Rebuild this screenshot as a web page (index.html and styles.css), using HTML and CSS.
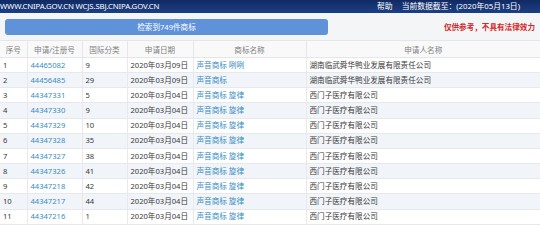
FILE: index.html
```html
<!DOCTYPE html>
<html lang="zh-CN">
<head>
<meta charset="utf-8">
<link rel="stylesheet" href="styles.css">
</head>
<body>
<div class="topbar">
  <span class="site">WWW.CNIPA.GOV.CN WCJS.SBJ.CNIPA.GOV.CN</span>
  <span class="right"><span class="help">帮助</span><span class="date">当前数据截至：(2020年05月13日)</span></span>
</div>
<div class="toolbar">
  <div class="count">检索到749件商标</div>
  <div class="notice">仅供参考，不具有法律效力</div>
</div>
<table class="grid">
  <colgroup>
    <col class="c1"><col class="c2"><col class="c3"><col class="c4"><col class="c5"><col class="c6">
  </colgroup>
  <thead>
    <tr><th>序号</th><th>申请/注册号</th><th>国际分类</th><th>申请日期</th><th>商标名称</th><th>申请人名称</th></tr>
  </thead>
  <tbody>
    <tr><td>1</td><td class="lk">44465082</td><td>9</td><td>2020年03月09日</td><td class="lk">声音商标 咧咧</td><td>湖南临武舜华鸭业发展有限责任公司</td></tr>
    <tr><td>2</td><td class="lk">44456485</td><td>29</td><td>2020年03月09日</td><td class="lk">声音商标</td><td>湖南临武舜华鸭业发展有限责任公司</td></tr>
    <tr><td>3</td><td class="lk">44347331</td><td>5</td><td>2020年03月04日</td><td class="lk">声音商标 旋律</td><td>西门子医疗有限公司</td></tr>
    <tr><td>4</td><td class="lk">44347330</td><td>9</td><td>2020年03月04日</td><td class="lk">声音商标 旋律</td><td>西门子医疗有限公司</td></tr>
    <tr><td>5</td><td class="lk">44347329</td><td>10</td><td>2020年03月04日</td><td class="lk">声音商标 旋律</td><td>西门子医疗有限公司</td></tr>
    <tr><td>6</td><td class="lk">44347328</td><td>35</td><td>2020年03月04日</td><td class="lk">声音商标 旋律</td><td>西门子医疗有限公司</td></tr>
    <tr><td>7</td><td class="lk">44347327</td><td>38</td><td>2020年03月04日</td><td class="lk">声音商标 旋律</td><td>西门子医疗有限公司</td></tr>
    <tr><td>8</td><td class="lk">44347326</td><td>41</td><td>2020年03月04日</td><td class="lk">声音商标 旋律</td><td>西门子医疗有限公司</td></tr>
    <tr><td>9</td><td class="lk">44347218</td><td>42</td><td>2020年03月04日</td><td class="lk">声音商标 旋律</td><td>西门子医疗有限公司</td></tr>
    <tr><td>10</td><td class="lk">44347217</td><td>44</td><td>2020年03月04日</td><td class="lk">声音商标 旋律</td><td>西门子医疗有限公司</td></tr>
    <tr><td>11</td><td class="lk">44347216</td><td>1</td><td>2020年03月04日</td><td class="lk">声音商标 旋律</td><td>西门子医疗有限公司</td></tr>
  </tbody>
</table>
</body>
</html>
```
FILE: styles.css
```css
html, body {
  margin: 0;
  padding: 0;
  background: #ffffff;
  font-family: "Noto Sans", "Noto Sans CJK SC", sans-serif;
  font-size: 7.6px;
  color: #3a3a3a;
  overflow: hidden;
}
.topbar {
  height: 13px;
  background: linear-gradient(#112a63, #1c3f84);
  color: #ffffff;
  display: flex;
  align-items: center;
  justify-content: space-between;
  padding: 0 20px 0 0;
  font-size: 7.8px;
  line-height: 13px;
}
.site {
  letter-spacing: -0.15px;
}
.right {
  display: flex;
  gap: 9px;
}
.toolbar {
  height: 27px;
  background: #f4f5f7;
  display: flex;
  align-items: center;
  padding: 0 5px;
  box-sizing: border-box;
  justify-content: space-between;
}
.count {
  width: 323px;
  height: 16px;
  margin-top: 1px;
  background: #5f92d9;
  border-radius: 3px;
  color: #ffffff;
  text-align: center;
  line-height: 16px;
  font-size: 7.6px;
}
.notice {
  color: #d42a2a;
  font-weight: bold;
  font-size: 7.6px;
}
.grid {
  width: 540px;
  border-collapse: collapse;
  table-layout: fixed;
}
.c1 { width: 27px; }
.c2 { width: 55px; }
.c3 { width: 45px; }
.c4 { width: 66px; }
.c5 { width: 113px; }
.c6 { width: 234px; }
.grid th {
  height: 17px;
  padding: 0;
  font-weight: normal;
  color: #808080;
  background: #f9f9fa;
  border: 1px solid #e4e6e9;
  border-left: none;
  text-align: center;
  box-sizing: border-box;
}
.grid th:last-child { border-right: none; }
.grid td {
  height: 15.17px;
  padding: 0 0 0 3px;
  border-bottom: 1px solid #e6e8ec;
  border-right: 1px solid #e8e9ec;
  white-space: nowrap;
  overflow: hidden;
  box-sizing: border-box;
  line-height: 13px;
}
.grid td:last-child { border-right: none; }
.grid tbody tr:nth-child(even) td {
  background: #f1f4f8;
}
.lk {
  color: #3a8ec2;
}
```
